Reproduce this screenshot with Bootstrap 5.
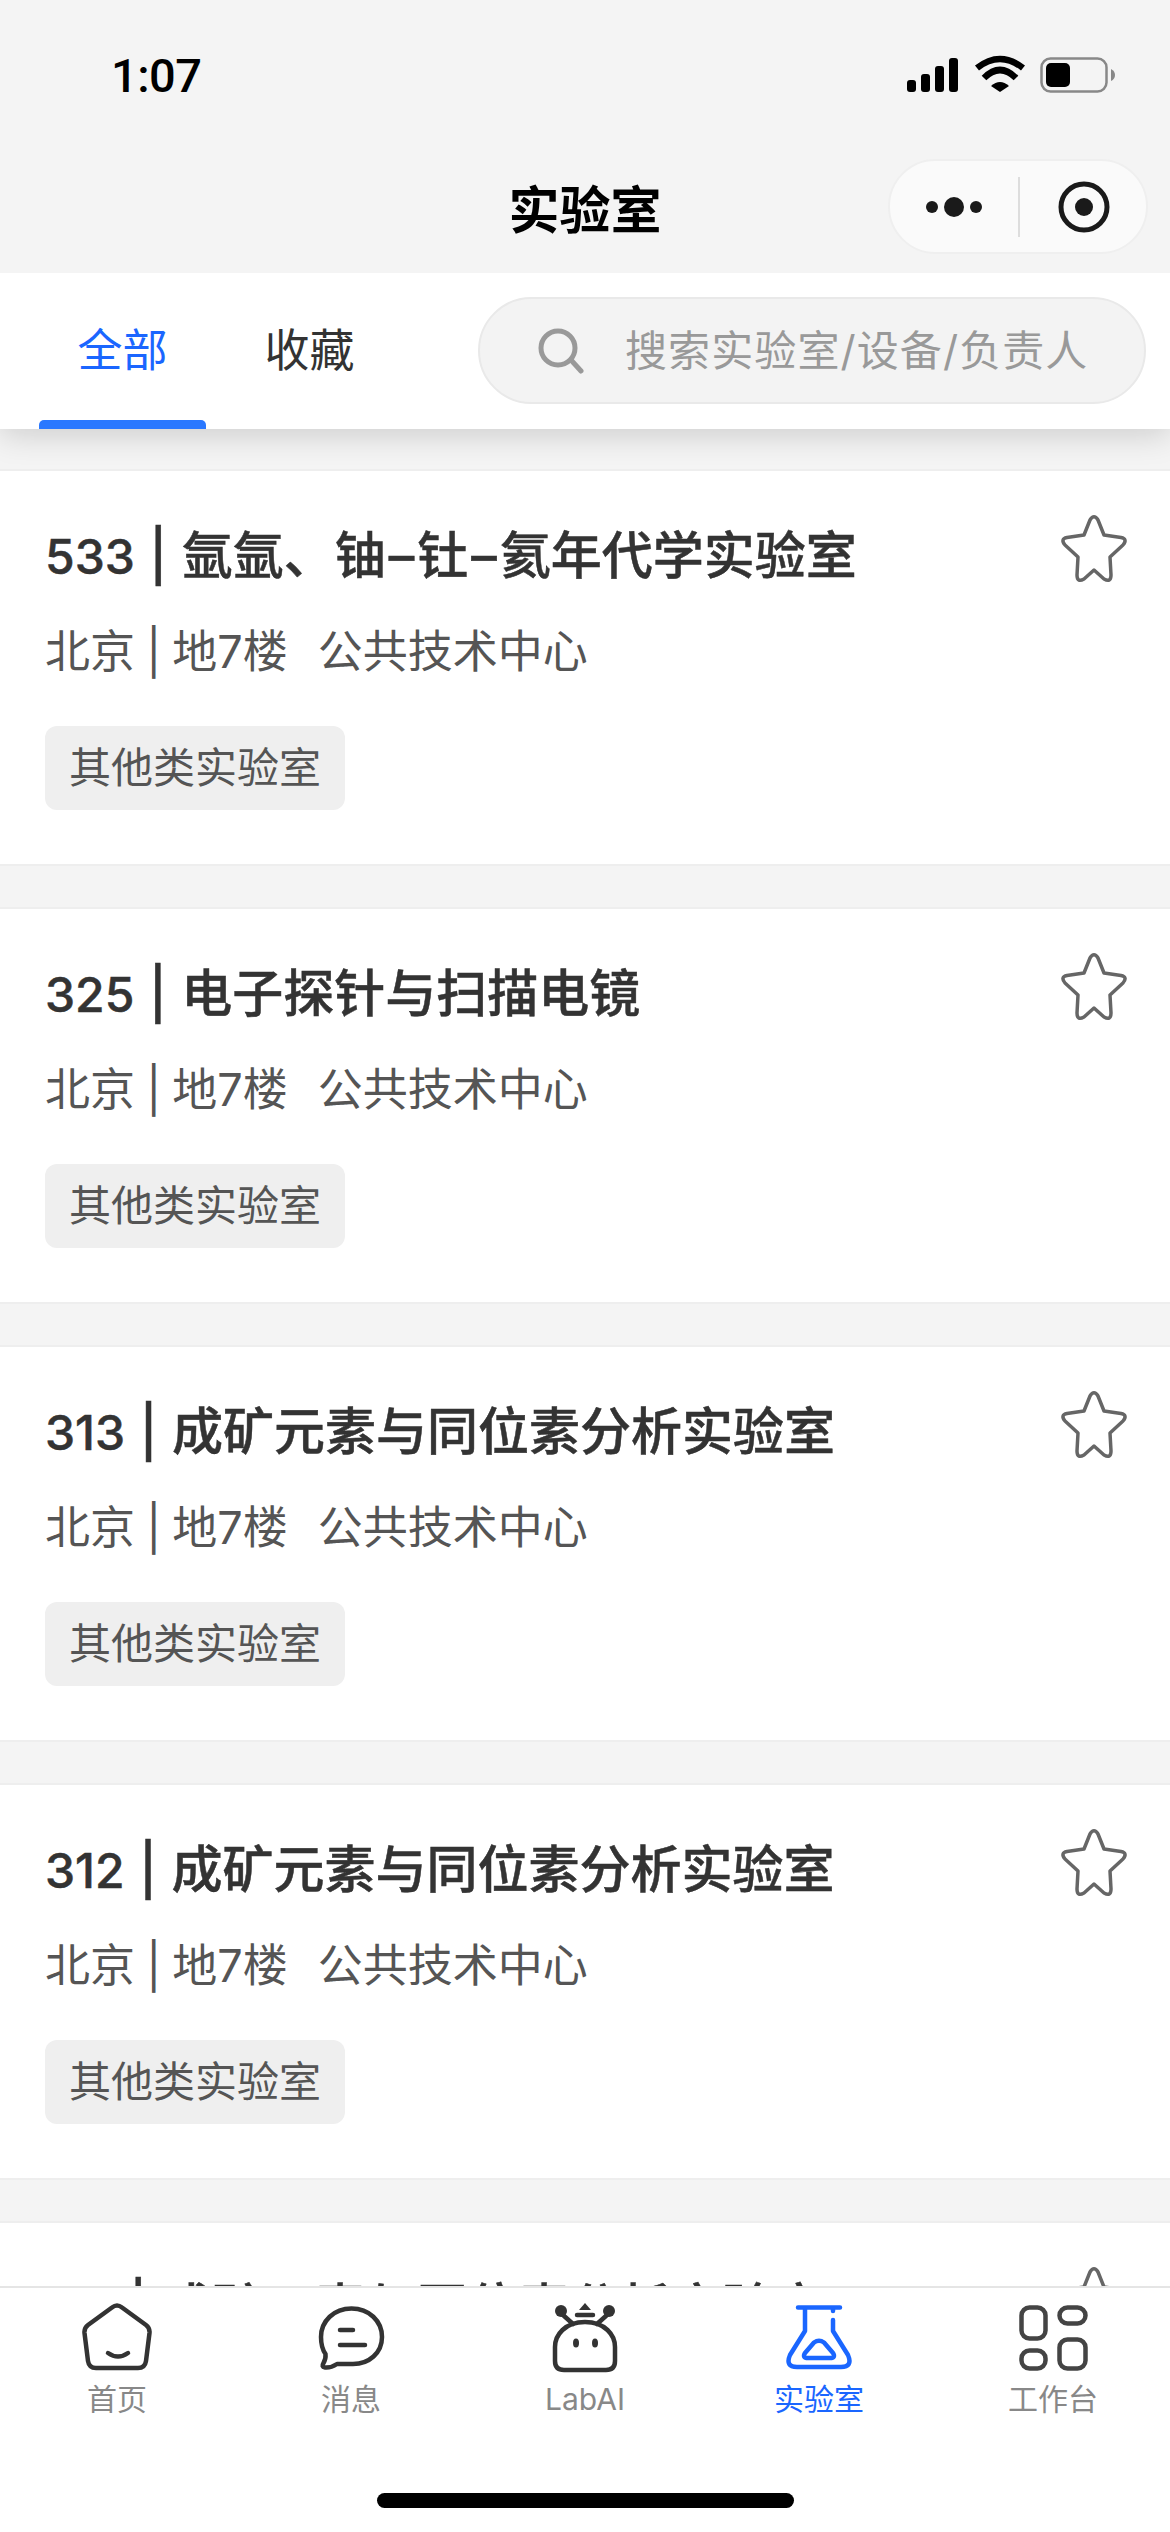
<!DOCTYPE html>
<html lang="zh-CN">
<head>
  <meta charset="UTF-8" />
  <title>实验室</title>
  <link href="https://cdn.jsdelivr.net/npm/bootstrap@5.3.0/dist/css/bootstrap.min.css" rel="stylesheet" />
  <style>
    body { background: #f4f4f4; font-family: Inter, "Noto Sans CJK SC", sans-serif; }
    .screen { width: 1170px; height: 2532px; overflow: hidden; }

    /* status bar + title bar */
    .status-row { height: 150px; padding: 0 54px 0 111px; flex-shrink: 0; }
    .status-time { font: 500 47px/1 Roboto, sans-serif; color: #000; letter-spacing: -.5px; }
    .title-row { height: 123px; padding: 0 22px 10px 22px; flex-shrink: 0; }
    .title-side { flex: 1 1 0; }
    .page-title { font: 700 51px/60px "Noto Sans CJK SC", sans-serif; color: #000; margin: 0; }
    .capsule { width: 260px; height: 95px; background: #fafafa; border: 2px solid #efefef; border-radius: 48px; padding: 0 0 0 36px; }
    .capsule-line { width: 2px; height: 60px; background: #ddd; margin: 0 38px 0 36px; }

    /* tabs + search */
    .top-tabs { height: 156px; background: #fff; box-shadow: 0 6px 30px rgba(0,0,0,.16); clip-path: inset(0 0 -70px 0); z-index: 2; padding: 0 24px 0 39px; flex-shrink: 0; }
    .tab-item { width: 167px; margin-right: 20px; font-size: 45px; color: #333; }
    .tab-item.on { color: #1a66ff; }
    .tab-text { padding-top: 8px; }
    .tab-bar { height: 9px; border-radius: 5px 5px 0 0; background: transparent; }
    .tab-item.on .tab-bar { background: #2a78ff; }
    .search-box { width: 668px; height: 107px; background: #f3f3f3; border: 2px solid #e9e9e9; border-radius: 54px; padding-left: 58px; gap: 41px; color: #999; font-size: 42px; letter-spacing: 1.1px; margin-top: 24px; }

    /* list */
    .lab-list { padding-top: 40px; overflow: hidden; min-height: 0; }
    .lab-card { height: 397px; margin-bottom: 41px; padding: 41px 41px 0 45px; border-width: 2px 0; border-color: #eee; border-radius: 0; flex-shrink: 0; }
    .lab-name { font-size: 51px; line-height: 58px; font-weight: 500; -webkit-text-stroke: .5px #333; word-spacing: 1px; color: #333; margin: 15px 0 0; }
    .lab-no { font-size: 48px; }
    .lab-dash { margin: 0 3px; }
    .lab-star { flex-shrink: 0; }
    .lab-place { font-size: 45px; line-height: 56px; color: #555; margin-top: 38px; word-spacing: -1.5px; }
    .lab-place .dept { margin-left: 30px; }
    .lab-tag { height: 84px; line-height: 84px; padding: 0 24px; background: #efefef; border-radius: 12px; font-size: 42px; color: #555; margin-top: 46px; }

    /* bottom tabs */
    .bottom-bar { height: 246px; background: #fff; border-top: 2px solid #e5e5e5; padding-top: 13px; flex-shrink: 0; }
    .bottom-item { width: 234px; font-size: 30px; line-height: 36px; color: #888; }
    .bottom-item.on { color: #1a66ff; }
    .bottom-label { margin-top: 8px; }
    .home-bar { width: 417px; height: 15px; border-radius: 8px; background: #000; margin-bottom: 24px; }
    .ico { fill: none; stroke: #333; stroke-width: 4.5; stroke-linecap: round; stroke-linejoin: round; }
  </style>
</head>
<body>
  <div class="screen d-flex flex-column">
    <div class="status-row d-flex justify-content-between align-items-center">
      <span class="status-time">1:07</span>
      <svg width="209" height="40" viewBox="0 0 209 40">
        <rect x="0" y="25" width="9" height="12" rx="3" />
        <rect x="14" y="19" width="9" height="18" rx="3" />
        <rect x="28" y="11" width="9" height="26" rx="3" />
        <rect x="42" y="3" width="9" height="34" rx="3" />
        <path d="M70 13Q93-5 116 13M77 23Q93 7 109 23" fill="none" stroke="#000" stroke-width="6.5" />
        <path d="M93 37L84 31Q93 23 102 31Z" />
        <rect x="134.500" y="3.500" width="65" height="33" rx="9" fill="none" stroke="#888" stroke-width="2.500" />
        <rect x="139" y="8" width="24" height="24" rx="5" />
        <path d="M204 14Q208 16 208 20Q208 24 204 26Z" fill="#888" />
      </svg>
    </div>

    <div class="title-row d-flex align-items-center">
      <div class="title-side"></div>
      <h1 class="page-title">实验室</h1>
      <div class="title-side d-flex justify-content-end">
        <div class="capsule d-flex align-items-center">
          <svg width="56" height="24" viewBox="0 0 56 24" fill="#1a1a1a">
            <circle cx="6" cy="12" r="6" /><circle cx="28" cy="12" r="10" /><circle cx="50" cy="12" r="6" />
          </svg>
          <div class="capsule-line"></div>
          <svg width="52" height="52" viewBox="0 0 52 52">
            <circle cx="26" cy="26" r="23" fill="none" stroke="#1a1a1a" stroke-width="5" />
            <circle cx="26" cy="26" r="9" fill="#1a1a1a" />
          </svg>
        </div>
      </div>
    </div>

    <div class="top-tabs d-flex position-relative">
      <div class="tab-item on d-flex flex-column text-center">
        <div class="tab-text flex-grow-1 d-flex align-items-center justify-content-center">全部</div>
        <div class="tab-bar"></div>
      </div>
      <div class="tab-item d-flex flex-column text-center">
        <div class="tab-text flex-grow-1 d-flex align-items-center justify-content-center">收藏</div>
        <div class="tab-bar"></div>
      </div>
      <div class="search-box ms-auto d-flex align-items-center">
        <svg width="46" height="46" viewBox="0 0 46 46" fill="none" stroke="#999" stroke-width="5" stroke-linecap="round">
          <circle cx="20" cy="20" r="17" /><path d="M33 32L43 43" />
        </svg>
        <span>搜索实验室/设备/负责人</span>
      </div>
    </div>

    <div class="lab-list flex-grow-1 d-flex flex-column" id="labList"></div>

    <div class="bottom-bar d-flex flex-column align-items-center">
      <div class="d-flex">
        <div class="bottom-item d-flex flex-column align-items-center">
          <svg class="ico" width="72" height="72" viewBox="0 0 72 72">
            <path d="M31 6.500Q36 2.500 41 6.500L65 24Q69 27 68.500 32L65 60Q64 67 57 67L15 67Q8 67 7 60L3.500 32Q3 27 7 24Z" />
            <path d="M27 52Q37 59 47 52" />
          </svg>
          <div class="bottom-label">首页</div>
        </div>
        <div class="bottom-item d-flex flex-column align-items-center">
          <svg class="ico" width="72" height="72" viewBox="0 0 72 72">
            <path d="M36.500 7.500C54 7.500 67 20 67 36C67 52 54 63 38 63L22 63Q16 67 10 66.500Q6 66 8.500 62Q11 58 10.500 53C7 48 6 42 6 36C6 20 19 7.500 36.500 7.500Z" />
            <path d="M25 29H38M25 44H50" />
          </svg>
          <div class="bottom-label">消息</div>
        </div>
        <div class="bottom-item d-flex flex-column align-items-center">
          <svg class="ico" width="72" height="72" viewBox="0 0 72 72">
            <path d="M15 69Q6 69 6 60L6 46C6 34 16 21 36 21C56 21 66 34 66 46L66 60Q66 69 57 69Z" />
            <path d="M14 14L24 23M58 14L48 23M28 14H44" />
            <circle cx="12" cy="10" r="6" fill="#333" stroke="none" />
            <circle cx="60" cy="10" r="6" fill="#333" stroke="none" />
            <path d="M36 2L42 9H30Z" fill="#333" stroke="none" />
            <ellipse cx="27" cy="42" rx="3" ry="4.500" fill="#333" stroke="none" />
            <ellipse cx="46" cy="42" rx="3" ry="4.500" fill="#333" stroke="none" />
          </svg>
          <div class="bottom-label">LabAI</div>
        </div>
        <div class="bottom-item on d-flex flex-column align-items-center">
          <svg class="ico" style="stroke:#1a66ff" width="72" height="72" viewBox="0 0 72 72">
            <path d="M15 6.500H57M22 6.500V30L7 54Q2 66 14 66L58 66Q70 66 65 54L50 30V19M50 6.500V10" />
            <path d="M31 41.500Q36 38 41 41.500L50 52Q53 57 47 57L25 57Q19 57 22 52Z" />
          </svg>
          <div class="bottom-label">实验室</div>
        </div>
        <div class="bottom-item d-flex flex-column align-items-center">
          <svg class="ico" style="stroke:#444" width="72" height="72" viewBox="0 0 72 72">
            <rect x="4.500" y="6.500" width="24" height="31" rx="8" />
            <rect x="42.500" y="6.500" width="26" height="16" rx="8" />
            <rect x="4.500" y="49.500" width="24" height="18" rx="8" />
            <rect x="42.500" y="38.500" width="26" height="29" rx="8" />
          </svg>
          <div class="bottom-label">工作台</div>
        </div>
      </div>
      <div class="home-bar mt-auto"></div>
    </div>
  </div>

  <script>
    // 实验室列表, 最后一张卡片被底部栏盖住
    var labs = [
      ["533", '氩氩、铀<span class="lab-dash">–</span>钍<span class="lab-dash">–</span>氦年代学实验室'],
      ["325", "电子探针与扫描电镜"],
      ["313", "成矿元素与同位素分析实验室"],
      ["312", "成矿元素与同位素分析实验室"],
      ["311", "成矿元素与同位素分析实验室"]
    ];
    var star = '<svg class="lab-star" width="70" height="74" viewBox="0 0 70 74" fill="none" stroke="#666" stroke-width="3.5" stroke-linejoin="round">' +
      '<path d="M25 23L31 8Q35 1.500 39 8L45 23L62 25.500Q69 27 64 33L51 45L52 63Q52 71 45 67L35 58L25 67Q18 71 18 63L19 45L6 33Q1 27 8 25.500Z"/></svg>';
    document.getElementById("labList").innerHTML = labs.map(function (lab, i) {
      var rest = i < 4 ? '<div class="lab-place">北京 | 地7楼<span class="dept">公共技术中心</span></div>' +
        '<div><span class="lab-tag d-inline-block">其他类实验室</span></div>' : '';
      return '<div class="card lab-card">' +
        '<div class="d-flex justify-content-between align-items-start"><h2 class="lab-name"><span class="lab-no">' + lab[0] + '</span> | ' + lab[1] + '</h2>' + star + '</div>' +
        rest + '</div>';
    }).join("");
  </script>
  <script src="https://cdn.jsdelivr.net/npm/bootstrap@5.3.0/dist/js/bootstrap.bundle.min.js"></script>
</body>
</html>
